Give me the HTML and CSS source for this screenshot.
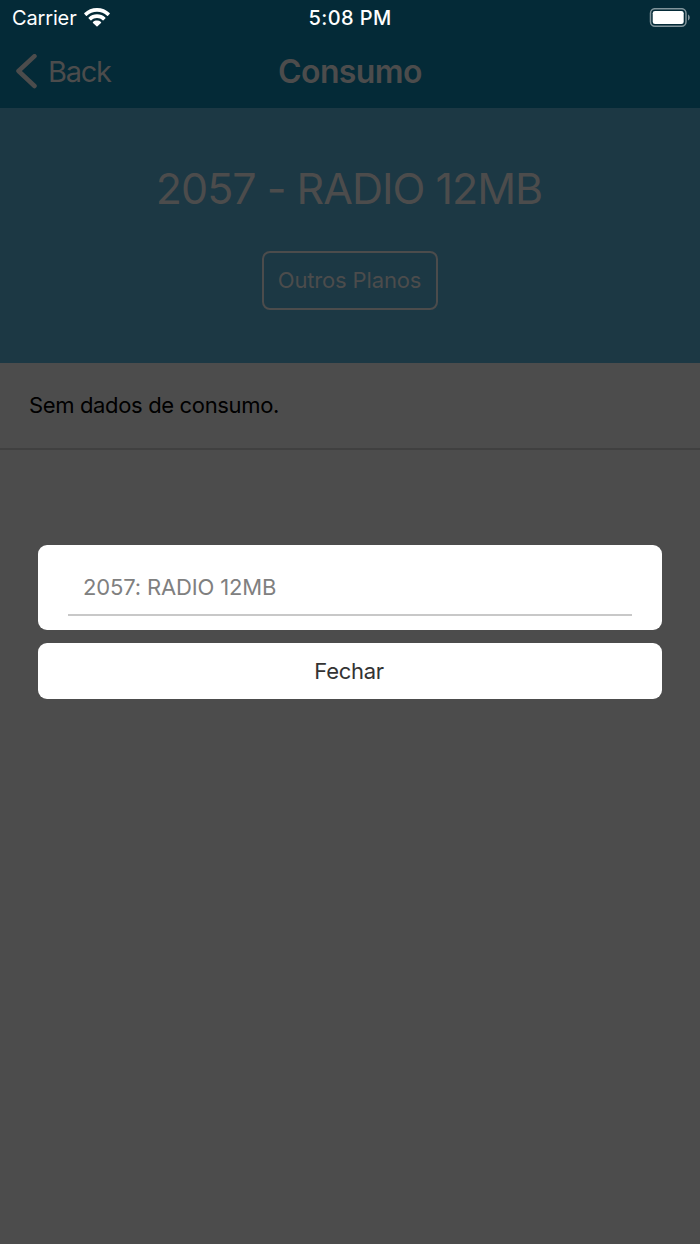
FILE: index.html
```html
<!DOCTYPE html>
<html lang="pt">
<head>
<meta charset="utf-8">
<title>Consumo</title>
<link rel="stylesheet" href="styles.css">
</head>
<body>
<div class="screen">
  <header class="top">
    <div class="status">
      <div class="carrier"><span class="carrier-name">Carrier</span>
        <svg class="wifi" viewBox="0 0 26 19" width="26" height="19"><path d="M13 0C8 0 3.600 1.900.4 5.100a.7.7 0 0 0 0 1L2 7.700a.6.6 0 0 0 .9 0C5.600 5.100 9.100 3.700 13 3.700s7.400 1.400 10.100 4a.6.6 0 0 0 .9 0l1.600-1.600a.7.7 0 0 0 0-1C22.400 1.900 18 0 13 0z"/><path d="M13 6.300c-3.200 0-6.100 1.200-8.300 3.200a.7.700 0 0 0 0 1l1.800 1.700c.3.300.6.300.9 0 1.500-1.300 3.500-2.100 5.600-2.100s4.100.8 5.600 2.100c.3.300.6.300.9 0l1.800-1.700a.7.7 0 0 0 0-1c-2.200-2-5.100-3.200-8.300-3.200z"/><path d="M13 12.500c-1.500 0-2.900.5-4 1.400-.3.300-.3.700 0 1l3.500 3.400c.3.300.7.300 1 0l3.500-3.400c.3-.3.300-.7 0-1a6.300 6.300 0 0 0-4-1.400z"/></svg>
      </div>
      <div class="time">5:08 PM</div>
      <svg class="battery" viewBox="0 0 42 20" width="42" height="20"><rect class="shell" x="1.500" y=".7" width="35.500" height="17.500" rx="4.500"/><rect class="charge" x="3.700" y="2.900" width="31" height="13.200" rx="2.300"/><path class="cap" d="M39 6.500c2.300.8 2.300 5.200 0 6z"/></svg>
    </div>
    <nav class="nav">
      <div class="back"><svg width="22" height="36" viewBox="0 0 22 36"><path d="M18.500 2.200 2.500 17l16 15"/></svg><span class="back-label">Back</span></div>
      <h1 class="nav-title">Consumo</h1>
      <span></span>
    </nav>
  </header>
  <section class="plan">
    <h2 class="plan-name">2057 - RADIO 12MB</h2>
    <div class="other"><span class="other-label">Outros Planos</span></div>
  </section>
  <div class="row"><span class="row-label">Sem dados de consumo.</span></div>
  <div class="dialog">
    <div class="options"><div class="option"><span class="option-label">2057: RADIO 12MB</span></div></div>
    <div class="close"><span class="close-label">Fechar</span></div>
  </div>
</div>
</body>
</html>
```

FILE: styles.css
```css
* { box-sizing: border-box; }
body { margin: 0; font-family: Inter, "Liberation Sans", sans-serif; }
.screen { position: relative; width: 700px; height: 1244px; overflow: hidden; background: #4c4c4c; color: #4c4c4c; }
.screen span, .time, .nav-title, .plan-name { white-space: nowrap; }
.top { height: 108px; background: #042a37; }
.status { display: grid; grid-template-columns: 1fr auto 1fr; height: 36px; padding: 0 12px; align-items: center; color: #fff; }
.carrier { display: flex; align-items: center; gap: 7.500px; font-size: 20px; }
.carrier-name { letter-spacing: -0.15px; }
.wifi { fill: #fff; margin-top: -2px; }
.time { font-size: 20px; font-weight: 550; letter-spacing: 0.4px; }
.battery { justify-self: end; margin: -1px -3px 0 0; }
.shell { fill: none; stroke: #81949b; stroke-width: 1.5; }
.charge { fill: #fff; }
.cap { fill: #81949b; }
.nav { display: grid; grid-template-columns: 1fr auto 1fr; height: 71px; align-items: center; padding: 0 16px; }
.back { display: flex; align-items: center; gap: 10px; font-size: 29px; letter-spacing: -1.3px; }
.back svg { fill: none; stroke: #4c4c4c; stroke-width: 4.500; stroke-linecap: round; stroke-linejoin: round; }
.nav-title { margin: 0; font-size: 32px; font-weight: 600; letter-spacing: -0.6px; }
.plan { display: flex; flex-direction: column; align-items: center; height: 255px; padding-top: 54px; background: #1c3844; }
.plan-name { margin: 0; padding-right: 2px; font-size: 43px; line-height: 52px; font-weight: 400; letter-spacing: -1px; }
.other { display: flex; align-items: center; justify-content: center; width: 176px; height: 59px; margin-top: 37px; padding-bottom: 2px; border: 2px solid #4c4c4c; border-radius: 8px; font-size: 22px; letter-spacing: -0.15px; }
.other-label { padding-right: 1px; }
.row { display: flex; align-items: center; height: 87px; padding: 0 29px 2px; border-bottom: 2px solid #404040; font-size: 22px; letter-spacing: -0.35px; color: #000; }
.dialog { position: absolute; left: 38px; top: 545px; width: 624px; display: flex; flex-direction: column; gap: 13px; }
.options { height: 85px; padding: 14px 30px; background: #fff; border-radius: 9px; }
.option { display: flex; align-items: center; height: 57px; padding: 0 15px; border-bottom: 2px solid #c8c8c8; font-size: 22px; letter-spacing: -0.15px; color: #808080; }
.close { display: flex; align-items: center; justify-content: center; height: 56px; padding-right: 2px; background: #fff; border-radius: 9px; font-size: 22px; letter-spacing: -0.3px; color: #333; }
```
